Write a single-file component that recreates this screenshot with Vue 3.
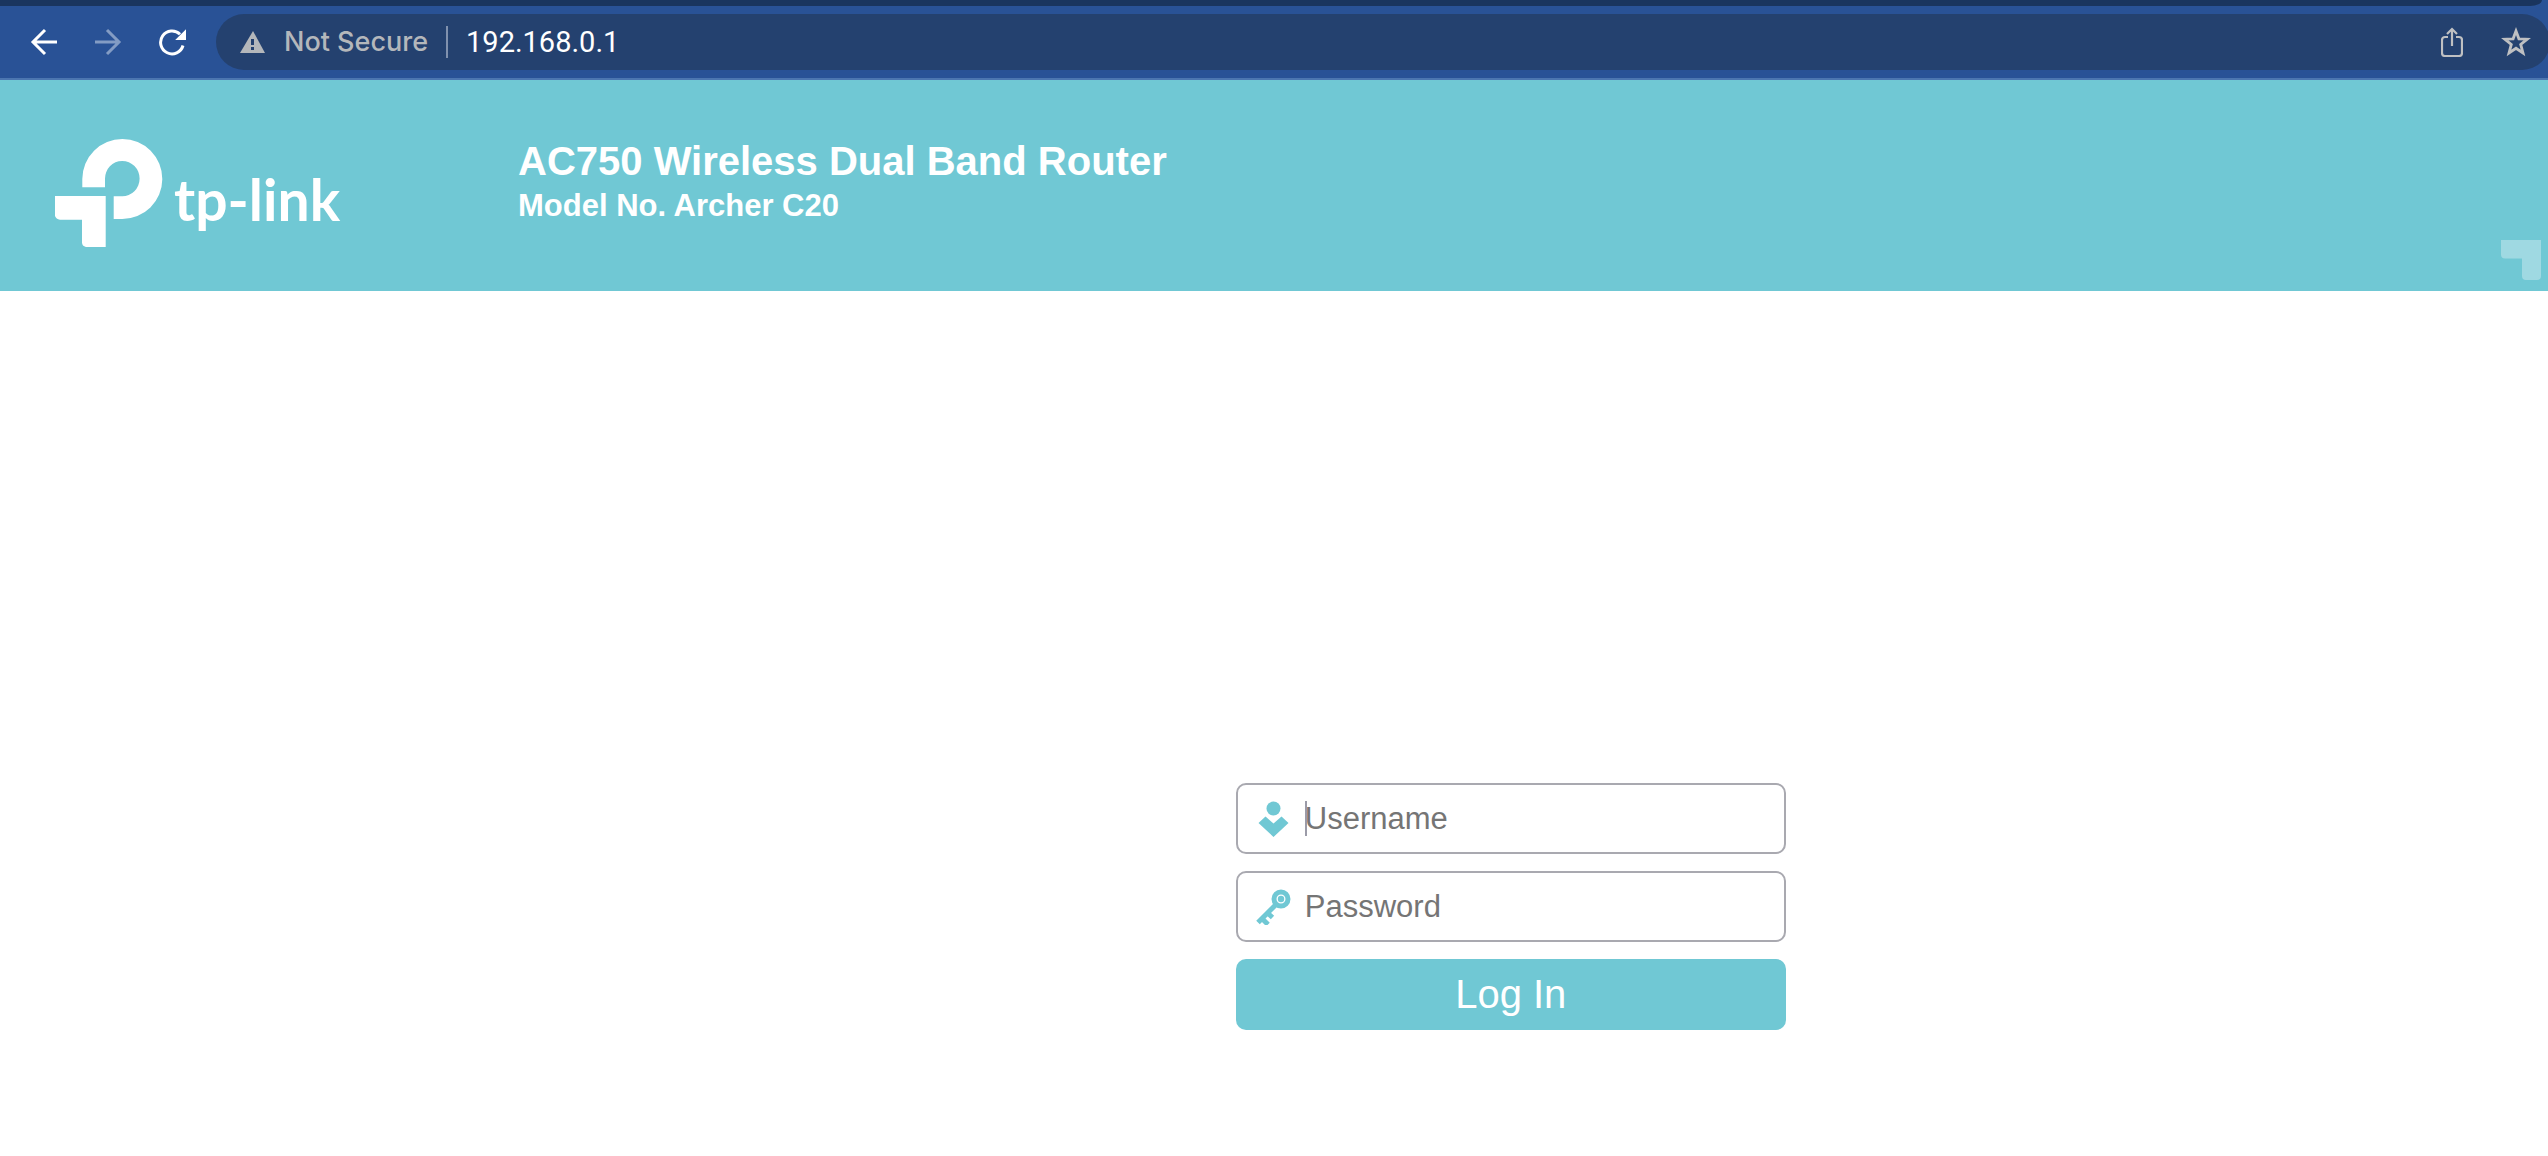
<script setup>
import { ref } from 'vue'

const username = ref('')
const password = ref('')
</script>

<template>
  <div class="window">
    <div class="tab-strip"></div>
    <nav class="toolbar" aria-label="Browser toolbar">
      <div class="nav-buttons">
        <button type="button" aria-label="Back">
          <svg width="28" height="28" viewBox="0 0 28 28" fill="none" stroke="#fff" stroke-width="3">
            <path d="M27 14H3M15 2L3 14l12 12" />
          </svg>
        </button>
        <button type="button" aria-label="Forward" disabled>
          <svg width="28" height="28" viewBox="0 0 28 28" fill="none" stroke="#839cc4" stroke-width="3">
            <path d="M1 14h24M13 2l12 12-12 12" />
          </svg>
        </button>
        <button type="button" aria-label="Reload">
          <svg width="28" height="28" viewBox="0 0 28 28">
            <path d="M25 17.500A11.400 11.400 0 1 1 22 6.300" fill="none" stroke="#fff" stroke-width="3" />
            <path d="M28 1.200V12H17.200Z" fill="#fff" />
          </svg>
        </button>
      </div>
      <div class="address">
        <svg width="26" height="22" viewBox="0 0 26 22">
          <path d="M13 0L25 22H0Z" fill="#b4b7bb" />
          <path d="M11 8h3v6h-3zM11 16h3v3h-3z" fill="#24416f" />
        </svg>
        <span class="security">Not Secure</span>
        <span class="divider"></span>
        <span class="url">192.168.0.1</span>
        <div class="actions">
          <button type="button" aria-label="Share">
            <svg width="22" height="30" viewBox="0 0 22 30" fill="none" stroke="#bfc0c2" stroke-width="2.200">
              <path d="M7 10H4a3 3 0 0 0-3 3v13a3 3 0 0 0 3 3h14a3 3 0 0 0 3-3V13a3 3 0 0 0-3-3h-3M11 19V2M6 7l5-5 5 5" />
            </svg>
          </button>
          <button type="button" aria-label="Bookmark">
            <svg width="30" height="30" viewBox="0 0 30 30" fill="none" stroke="#bfc0c2" stroke-width="2.800">
              <path d="M15 4l2.900 7.800 8.300.4-6.500 5.200 2.300 8.600-7-4.700L8 26l2.300-8.600-6.500-5.200 8.300-.4z" />
            </svg>
          </button>
        </div>
      </div>
    </nav>

    <header class="banner">
      <div class="brand">
        <svg width="108" height="108" viewBox="0 0 108 108" fill="#fff" aria-hidden="true">
          <path d="M27.300 48.300V40A40 40 0 1 1 67 80H58.700V57.300H67A17.300 17.700 0 1 0 50 40V48.300Z" />
          <path d="M0 57H50.700V108H31Q27 107 27 103.500V80.700H5Q1 80 0 77Z" />
        </svg>
        <span class="wordmark">tp-link</span>
      </div>
      <div class="product">
        <h1>AC750 Wireless Dual Band Router</h1>
        <h2>Model No. Archer C20</h2>
      </div>
      <svg class="corner" width="40" height="40" viewBox="0 0 40 40">
        <path d="M0 0H40V36Q40 40 36 40H25Q21 40 21 36V18.500H4Q0 18.500 0 14.500Z" fill="#9fd9e2" />
      </svg>
    </header>

    <main>
      <form @submit.prevent>
        <label class="field">
          <svg width="36" height="36" viewBox="0 0 36 36" fill="#70c8d4" aria-hidden="true">
            <circle cx="17.500" cy="7.500" r="7" />
            <path d="M2.500 22L9.500 15.500l8 7 8-7 7 6.500L17.500 36Z" />
          </svg>
          <span class="caret"></span>
          <input v-model="username" type="text" placeholder="Username" aria-label="Username" />
        </label>
        <label class="field">
          <svg width="36" height="36" viewBox="0 0 36 36" fill="none" stroke="#70c8d4" aria-hidden="true">
            <circle cx="25" cy="10" r="7" stroke-width="5" />
            <circle cx="25" cy="10" r="3.200" fill="#70c8d4" stroke="none" />
            <path d="M19.500 16L2 33.500M11.500 24l5 4.500M6 29.500l6 6" stroke-width="5" />
          </svg>
          <input v-model="password" type="password" placeholder="Password" aria-label="Password" />
        </label>
        <button class="login" type="submit">Log In</button>
      </form>
    </main>
  </div>
</template>

<style>
body {
  margin: 0;
  background: #fff;
}
</style>

<style scoped>
.window {
  overflow: hidden;
  font-family: "Liberation Sans", Arial, sans-serif;
  background: #fff;
}

svg {
  display: block;
  flex: none;
}

button {
  padding: 0;
  border: 0;
  background: none;
}

.tab-strip {
  height: 6px;
  background: #295296;
}

.tab-strip::before {
  content: "";
  display: block;
  height: 6px;
  margin-right: 6px;
  border-bottom-right-radius: 12px 6px;
  background: #1a355e;
}

.toolbar {
  display: flex;
  align-items: center;
  box-sizing: border-box;
  height: 74px;
  padding: 6px 0 6px 30px;
  border-bottom: 2px solid #4c76b0;
  background: #295296;
}

.nav-buttons {
  display: flex;
  gap: 36px;
  margin-right: 30px;
}

.address {
  display: flex;
  align-items: center;
  flex: 1;
  height: 56px;
  margin-right: -2px;
  padding-left: 24px;
  border-radius: 28px;
  background: #24416f;
}

.security {
  margin-left: 18px;
  color: #b4b7bb;
  font: 500 27px/34px Inter, sans-serif;
}

.divider {
  width: 2px;
  height: 32px;
  margin: 0 18px;
  background: #8091ae;
}

.url {
  color: #fff;
  font: 29px/34px Roboto, sans-serif;
}

.actions {
  display: flex;
  gap: 38px;
  margin-left: auto;
  margin-right: 19px;
}

.banner {
  position: relative;
  display: flex;
  box-sizing: border-box;
  height: 211px;
  padding: 59px 55px 0;
  background: #70c8d4;
  color: #fff;
}

.brand {
  display: flex;
  align-items: flex-start;
  flex: none;
  width: 463px;
}

.wordmark {
  margin: 24px 0 0 11px;
  font-family: Lato, sans-serif;
  font-size: 57px;
  font-weight: 700;
  line-height: 72px;
}

h1,
h2 {
  margin: 0;
  font-weight: 700;
  white-space: nowrap;
}

h1 {
  font-size: 40px;
  line-height: 44px;
}

h2 {
  font-size: 31px;
  line-height: 46px;
}

.corner {
  position: absolute;
  right: 7px;
  bottom: 11px;
}

main {
  padding: 492px 0 126px 48.5%;
}

form {
  display: flex;
  flex-direction: column;
  gap: 17px;
  width: 550px;
}

.field {
  position: relative;
  display: flex;
  align-items: center;
  box-sizing: border-box;
  height: 71px;
  padding: 1px 0 0 18px;
  border: 2px solid #a9a9b0;
  border-radius: 10px;
}

input {
  flex: 1;
  min-width: 0;
  height: 60px;
  margin-left: 13px;
  padding: 0;
  border: 0;
  outline: 0;
  background: none;
  font: 31px/36px "Liberation Sans", Arial, sans-serif;
}

input::placeholder {
  color: #757575;
  opacity: 1;
}

.caret {
  position: absolute;
  top: 16px;
  left: 67px;
  width: 2px;
  height: 35px;
  background: #9b9ba8;
}

.login {
  height: 71px;
  padding-bottom: 2px;
  border-radius: 10px;
  background: #70c8d4;
  color: #fff;
  font: 40px/46px "Liberation Sans", Arial, sans-serif;
}
</style>
